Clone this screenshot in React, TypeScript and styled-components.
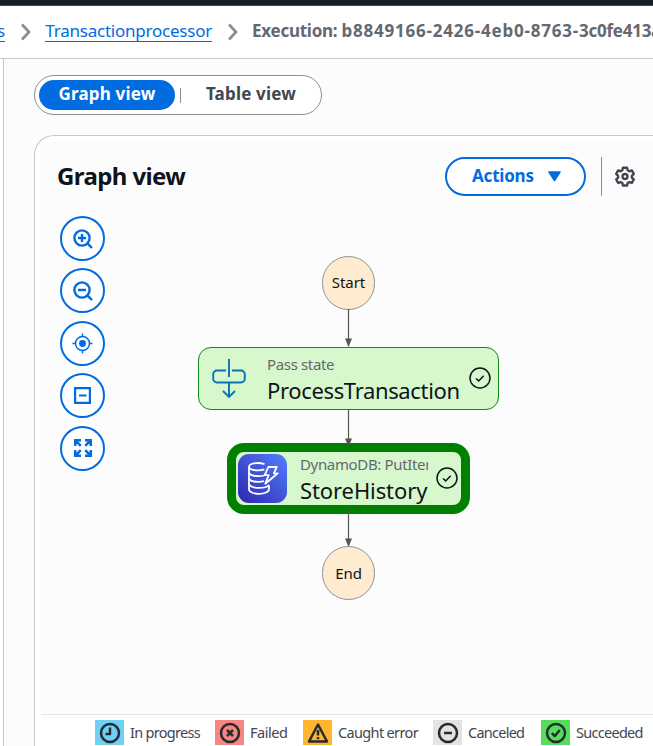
import React from "react";
import styled, { createGlobalStyle } from "styled-components";

const GlobalStyle = createGlobalStyle`
  * { box-sizing: border-box; }
  html, body { margin: 0; padding: 0; overflow: hidden; background: #fff; }
  body { font-family: "Noto Sans", "Open Sans", sans-serif; color: #0f141a; }
`;

const Page = styled.div`
  width: 653px;
  height: 746px;
  display: flex;
  flex-direction: column;
  overflow: hidden;
`;

const TopBar = styled.header`
  flex: 0 0 6px;
  background: #161d26;
  border-bottom: 1px solid #424650;
`;

const Breadcrumbs = styled.nav`
  flex: 0 0 53px;
  display: flex;
  align-items: center;
  border-bottom: 1px solid #c6c6cd;
  font-size: 17px;
  line-height: 20px;
  white-space: nowrap;
  overflow: hidden;
  padding-bottom: 2px;
`;

const Crumb = styled.a<{ $width: number }>`
  flex: 0 0 ${(p) => p.$width}px;
  min-width: 0;
  color: #006ce0;
  border-bottom: 1px solid #006ce0;
  height: 21px;
  line-height: 20px;
  display: flex;
  justify-content: flex-end;
  letter-spacing: -0.23px;
`;

const CurrentCrumb = styled.span`
  color: #656871;
  font-weight: 700;
  letter-spacing: -0.25px;
`;

const Digits = styled.span`
  letter-spacing: 0.78px;
`;

const Chevron = styled.svg<{ $left: number; $right: number }>`
  flex: 0 0 10px;
  margin: 2px ${(p) => p.$right}px 0 ${(p) => p.$left}px;
`;

const Body = styled.div`
  flex: 1;
  display: flex;
  min-height: 0;
`;

const SideRail = styled.aside`
  flex: 0 0 4px;
  border-right: 1px solid #c6c6cd;
`;

const Main = styled.main`
  flex: 1;
  display: flex;
  flex-direction: column;
  min-width: 0;
  padding: 16px 0 0 30px;
  background: #fcfcfd;
`;

const Segmented = styled.div`
  flex: 0 0 40px;
  width: 288px;
  display: flex;
  align-items: center;
  padding-left: 4px;
  border: 1px solid #8c8c94;
  border-radius: 20px;
  background: #fff;
`;

const Segment = styled.button<{ $active?: boolean }>`
  flex: 0 0 ${(p) => (p.$active ? 136 : 140)}px;
  height: 30px;
  padding: 0 0 3px;
  border: 0;
  border-radius: 15px;
  background: ${(p) => (p.$active ? "#006ce0" : "transparent")};
  color: ${(p) => (p.$active ? "#fff" : "#424650")};
  font: 700 17px/26px "Noto Sans", sans-serif;
  letter-spacing: 0.2px;
  white-space: nowrap;
`;

const SegmentDivider = styled.i`
  flex: 0 0 1px;
  height: 15px;
  margin-left: 5px;
  background: #8c8c94;
`;

const Panel = styled.section`
  flex: 1;
  min-height: 0;
  display: flex;
  flex-direction: column;
  margin-top: 20px;
  padding: 6px 0 0 6px;
  border: 1px solid #c6c6cd;
  border-width: 1px 0 0 1px;
  border-radius: 20px 0 0 0;
  background: #fff;
`;

const PanelHeader = styled.div`
  flex: 0 0 68px;
  display: flex;
  align-items: center;
  padding: 0 18px 0 16px;
  background: #fcfcfd;
`;

const Title = styled.h2`
  margin: 0 auto 0 0;
  font-size: 24px;
  line-height: 30px;
  font-weight: 700;
  letter-spacing: -0.6px;
`;

const ActionsButton = styled.button`
  width: 141px;
  height: 39px;
  display: flex;
  align-items: center;
  padding: 0 0 0 25px;
  gap: 14px;
  border: 2px solid #006ce0;
  border-radius: 20px;
  background: #fff;
  color: #006ce0;
  font: 700 17px/24px "Noto Sans", sans-serif;
  letter-spacing: -0.2px;
`;

const HeaderDivider = styled.i`
  width: 1px;
  height: 39px;
  margin: 0 13px 0 15px;
  background: #8c8c94;
`;

const Canvas = styled.div`
  flex: 0 0 505px;
  position: relative;
  background: #fcfcfd;
  border-bottom: 1px solid #e4e4e7;
`;

const Controls = styled.div`
  display: flex;
  flex-direction: column;
  gap: 7.4px;
  padding: 6px 0 0 19px;
`;

const RoundButton = styled.button`
  width: 45px;
  height: 45px;
  padding: 0;
  display: flex;
  align-items: center;
  justify-content: center;
  border: 2px solid #006ce0;
  border-radius: 50%;
  background: #fff;
  color: #006ce0;
`;

const Edges = styled.svg`
  position: absolute;
  left: 300px;
  top: 98px;
  z-index: 2;
`;

const Terminal = styled.div<{ $top: number }>`
  position: absolute;
  left: 280.7px;
  top: ${(p) => p.$top}px;
  width: 53.6px;
  height: 53.6px;
  display: flex;
  align-items: center;
  justify-content: center;
  padding-bottom: 1px;
  border: 1px solid #919191;
  border-radius: 50%;
  background: #ffebcf;
  font-size: 15px;
  line-height: 20px;
  letter-spacing: -0.05px;
`;

const StateNode = styled.div<{ $selected?: boolean }>`
  position: absolute;
  left: ${(p) => (p.$selected ? 186 : 157)}px;
  top: ${(p) => (p.$selected ? 233 : 137)}px;
  width: ${(p) => (p.$selected ? 243 : 301)}px;
  height: ${(p) => (p.$selected ? 71 : 63)}px;
  display: flex;
  align-items: center;
  padding: ${(p) => (p.$selected ? "0 2px 0 2px" : "0 8px 0 13px")};
  border: ${(p) => (p.$selected ? "9px solid #008000" : "1.5px solid #118a11")};
  border-radius: ${(p) => (p.$selected ? 17 : 13)}px;
  background: #d7f7cd;
`;

const NodeText = styled.div<{ $selected?: boolean }>`
  flex: 0 0 ${(p) => (p.$selected ? 128 : 196)}px;
  margin: 0 ${(p) => (p.$selected ? 8 : 6)}px 0 ${(p) => (p.$selected ? 13 : 21)}px;
  overflow: hidden;
  white-space: nowrap;
`;

const NodeKind = styled.div`
  font-size: 15px;
  line-height: 22px;
  color: #656871;
  letter-spacing: -0.35px;
`;

const NodeName = styled.div<{ $spacing: number }>`
  font-size: 22px;
  line-height: 30px;
  letter-spacing: ${(p) => p.$spacing}px;
`;

const Legend = styled.footer`
  flex: 1;
  display: flex;
  padding: 5px 0 0 54px;
  background: #fff;
`;

const LegendItem = styled.div<{ $width: number }>`
  flex: 0 0 ${(p) => p.$width}px;
  display: flex;
  gap: 6px;
  font-size: 14.5px;
  line-height: 24px;
  color: #424650;
  white-space: nowrap;
`;

const LegendLabel = styled.span<{ $spacing: number }>`
  letter-spacing: ${(p) => p.$spacing}px;
`;

const Swatch = styled.span<{ $color: string }>`
  flex: 0 0 29px;
  height: 25px;
  display: flex;
  align-items: center;
  justify-content: center;
  background: ${(p) => p.$color};
`;

const PassSvg = styled.svg`
  flex: 0 0 34px;
`;

const ServiceSvg = styled.svg`
  flex: 0 0 49px;
`;

const DoneSvg = styled.svg`
  flex: 0 0 22px;
  margin-top: -1px;
`;

const Separator = ({ left, right }: { left: number; right: number }) => (
  <Chevron $left={left} $right={right} width="10" height="18" viewBox="0 0 10 18" fill="none" stroke="#8c8c94" strokeWidth="2.7">
    <path d="M1 1.5 8 9 1 16.5" />
  </Chevron>
);

const Magnifier = ({ plus }: { plus?: boolean }) => (
  <svg width="20" height="20" viewBox="0 0 20 20" fill="none" stroke="currentColor" strokeWidth="2.4">
    <circle cx="9" cy="9" r="7.6" />
    <path d="m14.300 14.300 4.700 4.700M5 9h8" />
    {plus && <path d="M9 5v8" />}
  </svg>
);

const Target = () => (
  <svg width="21" height="21" viewBox="0 0 21 21" fill="none" stroke="currentColor" strokeWidth="1.5">
    <circle cx="10.500" cy="10.500" r="7" />
    <circle cx="10.500" cy="10.500" r="3.400" fill="currentColor" stroke="none" />
    <path d="M10.500.5v3.500M10.500 17v3.500M.5 10.500h3.500M17 10.500h3.500" />
  </svg>
);

const SquareMinus = () => (
  <svg width="17" height="17" viewBox="0 0 17 17" fill="none" stroke="currentColor" strokeWidth="2.200">
    <path d="M1.100 1.100h14.800v14.800H1.100zM5 8.500h7.500" />
  </svg>
);

const Expand = () => (
  <svg width="18" height="18" viewBox="0 0 18 18" fill="none" stroke="currentColor" strokeWidth="2.500">
    <path d="M1.250 7V1.250H7M11 1.250h5.750V7M16.750 11v5.750H11M7 16.750H1.250V11M1.500 1.500l5.300 5.300M16.500 1.500l-5.300 5.300M16.500 16.500l-5.300-5.300M1.500 16.500l5.300-5.300" />
  </svg>
);

const Gear = () => (
  <svg width="20" height="21" viewBox="0 0 21 21" fill="none" stroke="#424650" strokeWidth="2.500" strokeLinejoin="round">
    <path d="M8.300 1.300h4.400l.6 2.700 1.700 1 2.700-.9 2 3.700-2 2v1.900l2 1.900-2 3.700-2.700-.9-1.700 1-.6 2.500H8.300l-.6-2.500-1.700-1-2.700.9-2-3.700 2-1.900V9.800l-2-2 2-3.700L6 5l1.700-1z" />
    <circle cx="10.500" cy="10.500" r="2.600" />
  </svg>
);

const PassIcon = () => (
  <PassSvg width="34" height="41" viewBox="0 0 34 41" fill="none" stroke="#0972b8" strokeWidth="1.9">
    <path d="M17 1v18M14 12.500H5a3.800 3.800 0 0 0-3.800 3.800v4.400A3.800 3.800 0 0 0 5 24.500h24a3.800 3.800 0 0 0 3.800-3.800v-4.400a3.800 3.800 0 0 0-3.800-3.800h-9M17 24.500v14.500M11 33l6 6 6-6" />
  </PassSvg>
);

const DatabaseIcon = () => (
  <ServiceSvg width="49" height="49" viewBox="0 0 49 49" fill="none">
    <defs>
      <linearGradient id="db" x1="0" y1="1" x2="1" y2="0">
        <stop offset="0" stopColor="#2e27ad" />
        <stop offset="1" stopColor="#527fff" />
      </linearGradient>
    </defs>
    <rect width="49" height="49" rx="11" fill="url(#db)" />
    <g stroke="#fff" strokeWidth="1.800" strokeLinejoin="round">
      <path d="M26.500 10.200C24.500 9.400 22 9 19.800 9c-5 0-8.800 1.500-8.800 3.700s4 3.600 9 3.600c2.400 0 4.700-.4 6.300-1" />
      <path d="M11 12.700v22.600c0 2.500 4.500 4.500 10 4.500s10-2 10-4.500v-4" />
      <path d="M11 18.300c0 2.300 4.200 3.900 9.400 3.900 2 0 4-.2 5.600-.7M11 24c0 2.300 4.200 3.900 9.400 3.900 2 0 4-.2 5.600-.7M11 29.800c0 2.300 4.500 4.100 10 4.100 4.700 0 8.600-1.200 10-2.900" />
      <path d="M30.300 13h8.500l-3 6.300h4L27.300 29.700l3.400-8.500h-4z" />
    </g>
  </ServiceSvg>
);

const DoneMark = () => (
  <DoneSvg width="22" height="22" viewBox="0 0 22 22" fill="none" stroke="#0f141a" strokeWidth="1.500">
    <circle cx="11" cy="11" r="10" />
    <path d="m7 11.500 2.700 2.400 5-5.200" />
  </DoneSvg>
);

const glyphs = {
  clock: <path d="M11 5.500V12H6.500" />,
  cross: <path d="m8 8 6 6M14 8l-6 6" />,
  minus: <path d="M7 11h8" />,
  check: <path d="m6.800 11.200 3 2.800 5-6" />,
};

const StatusIcon = ({ kind }: { kind: keyof typeof glyphs | "warning" }) => (
  <svg width="22" height="22" viewBox="0 0 22 22" fill="none" stroke="#252b30" strokeWidth="2.500" strokeLinejoin="round">
    {kind === "warning" ? (
      <path d="M11 2.500 20 19.500H2zM11 8v5.500M11 15v2.200" />
    ) : (
      <>
        <circle cx="11" cy="11" r="9" />
        {glyphs[kind]}
      </>
    )}
  </svg>
);

const statuses = [
  { label: "In progress", color: "#6fd0f2", kind: "clock", width: 120, spacing: -0.7 },
  { label: "Failed", color: "#f98583", kind: "cross", width: 88, spacing: -0.45 },
  { label: "Caught error", color: "#ffb52e", kind: "warning", width: 130, spacing: -0.65 },
  { label: "Canceled", color: "#e3e3e3", kind: "minus", width: 108, spacing: -0.75 },
  { label: "Succeeded", color: "#55df59", kind: "check", width: 112, spacing: -0.72 },
] as const;

export default function App() {
  return (
    <Page>
      <GlobalStyle />
      <TopBar />
      <Breadcrumbs>
        <Crumb $width={5}>s</Crumb>
        <Separator left={16} right={14} />
        <Crumb $width={167}>Transactionprocessor</Crumb>
        <Separator left={16} right={14} />
        <CurrentCrumb>
          Execution: <Digits>b8849166-2426-4eb0-8763-</Digits>3c0fe413a
        </CurrentCrumb>
      </Breadcrumbs>
      <Body>
        <SideRail />
        <Main>
          <Segmented>
            <Segment $active>Graph view</Segment>
            <SegmentDivider />
            <Segment>Table view</Segment>
          </Segmented>
          <Panel>
            <PanelHeader>
              <Title>Graph view</Title>
              <ActionsButton>
                Actions
                <svg width="13" height="11" viewBox="0 0 13 11">
                  <path d="M1 1h11L6.500 9.500z" fill="#006ce0" stroke="#006ce0" strokeWidth="1.500" strokeLinejoin="round" />
                </svg>
              </ActionsButton>
              <HeaderDivider />
              <Gear />
            </PanelHeader>
            <Canvas>
              <Controls>
                <RoundButton><Magnifier plus /></RoundButton>
                <RoundButton><Magnifier /></RoundButton>
                <RoundButton><Target /></RoundButton>
                <RoundButton><SquareMinus /></RoundButton>
                <RoundButton><Expand /></RoundButton>
              </Controls>
              <Terminal $top={46}>Start</Terminal>
              <StateNode>
                <PassIcon />
                <NodeText>
                  <NodeKind>Pass state</NodeKind>
                  <NodeName $spacing={-0.35}>ProcessTransaction</NodeName>
                </NodeText>
                <DoneMark />
              </StateNode>
              <StateNode $selected>
                <DatabaseIcon />
                <NodeText $selected>
                  <NodeKind>DynamoDB: PutItem</NodeKind>
                  <NodeName $spacing={-0.1}>StoreHistory</NodeName>
                </NodeText>
                <DoneMark />
              </StateNode>
              <Terminal $top={336.3}>End</Terminal>
              <Edges width="16" height="242" viewBox="0 0 16 242" stroke="#555" strokeWidth="1.200" fill="#555">
                <path d="M7.500 1v37M7.500 102v35M7.500 202v35" />
                <path d="M4 30.500h7l-3.500 8.500zM4 130.500h7l-3.500 8.500zM4 230.500h7l-3.500 8.500z" stroke="none" />
              </Edges>
            </Canvas>
            <Legend>
              {statuses.map((s) => (
                <LegendItem key={s.label} $width={s.width}>
                  <Swatch $color={s.color}><StatusIcon kind={s.kind} /></Swatch>
                  <LegendLabel $spacing={s.spacing}>{s.label}</LegendLabel>
                </LegendItem>
              ))}
            </Legend>
          </Panel>
        </Main>
      </Body>
    </Page>
  );
}
